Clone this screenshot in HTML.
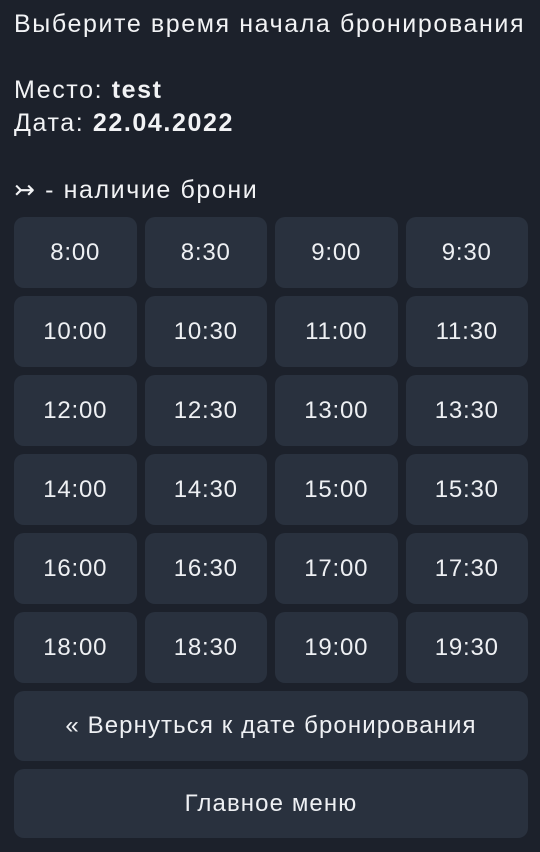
<!DOCTYPE html>
<html><head><meta charset="utf-8"><style>
body{margin:0;width:540px;height:852px;background:#1c212b;font-family:"Liberation Sans",sans-serif;color:#f2f3f5;overflow:hidden;position:relative}
.t{position:absolute;left:14px;font-size:25px;letter-spacing:1.6px;white-space:nowrap}
.g{position:absolute;left:14px;top:217px;width:514px;display:grid;grid-template-columns:repeat(4,1fr);gap:8px;}
.b{background:#29313e;border-radius:10px;height:71px;display:flex;align-items:center;justify-content:center;font-size:24px;letter-spacing:0.8px;color:#eef0f3}
.w{grid-column:1/5;height:70px;letter-spacing:1.1px}
</style></head><body>
<div class="t" style="top:10px">Выберите время начала бронирования</div>
<div class="t" style="top:76px">Место: <b>test</b></div>
<div class="t" style="top:109px">Дата: <b>22.04.2022</b></div>
<div class="t" style="top:175px">↣ - наличие брони</div>
<div class="g">
<div class="b">8:00</div><div class="b">8:30</div><div class="b">9:00</div><div class="b">9:30</div>
<div class="b">10:00</div><div class="b">10:30</div><div class="b">11:00</div><div class="b">11:30</div>
<div class="b">12:00</div><div class="b">12:30</div><div class="b">13:00</div><div class="b">13:30</div>
<div class="b">14:00</div><div class="b">14:30</div><div class="b">15:00</div><div class="b">15:30</div>
<div class="b">16:00</div><div class="b">16:30</div><div class="b">17:00</div><div class="b">17:30</div>
<div class="b">18:00</div><div class="b">18:30</div><div class="b">19:00</div><div class="b">19:30</div>
<div class="b w">« Вернуться к дате бронирования</div>
<div class="b w" style="height:69px">Главное меню</div>
</div>
</body></html>
